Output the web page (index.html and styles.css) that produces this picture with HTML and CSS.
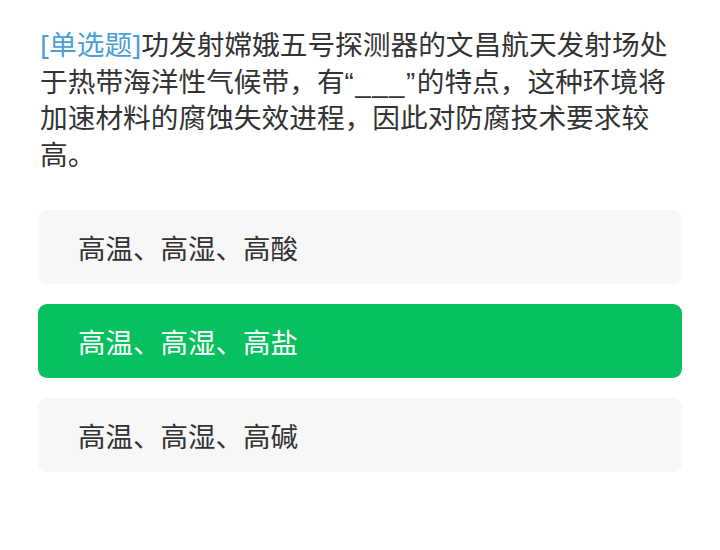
FILE: index.html
```html
<!DOCTYPE html>
<html lang="zh-CN">
<head>
    <meta charset="UTF-8">
    <meta name="viewport" content="width=device-width, initial-scale=1.0">
    <title>单选题</title>
    <link rel="stylesheet" href="styles.css">
</head>
<body>
    <div class="quiz">
        <div class="question"><span class="tag">[单选题]</span>功发射嫦娥五号探测器的文昌航天发射场处于热带海洋性气候带，有<span class="blank">“___”</span>的特点，这种环境将加速材料的腐蚀失效进程，因此对防腐技术要求较高。</div>
        <div class="options">
            <div class="option">高温、高湿、高酸</div>
            <div class="option selected">高温、高湿、高盐</div>
            <div class="option">高温、高湿、高碱</div>
        </div>
    </div>
</body>
</html>
```

FILE: styles.css
```css
body {
    margin: 0;
    background: #fff;
    font-family: "Noto Sans", "Noto Sans CJK SC", sans-serif;
    color: #333;
}
.quiz {
    padding: 26px 38px 0 38px;
}
.question {
    font-size: 27.7px;
    line-height: 36.5px;
    padding: 0 2px;
}
.tag {
    color: #4a9fd9;
}
.blank {
    font-family: "Liberation Sans", "Noto Sans CJK SC", sans-serif;
    letter-spacing: 1.5px;
    line-height: 1;
}
.options {
    display: flex;
    flex-direction: column;
    gap: 20px;
    margin-top: 38px;
}
.option {
    height: 74px;
    display: flex;
    align-items: center;
    padding-left: 40px;
    background: #f7f7f7;
    border-radius: 9px;
    font-size: 27.5px;
    color: #333;
}
.option.selected {
    background: #07c160;
    color: #fff;
}
```
